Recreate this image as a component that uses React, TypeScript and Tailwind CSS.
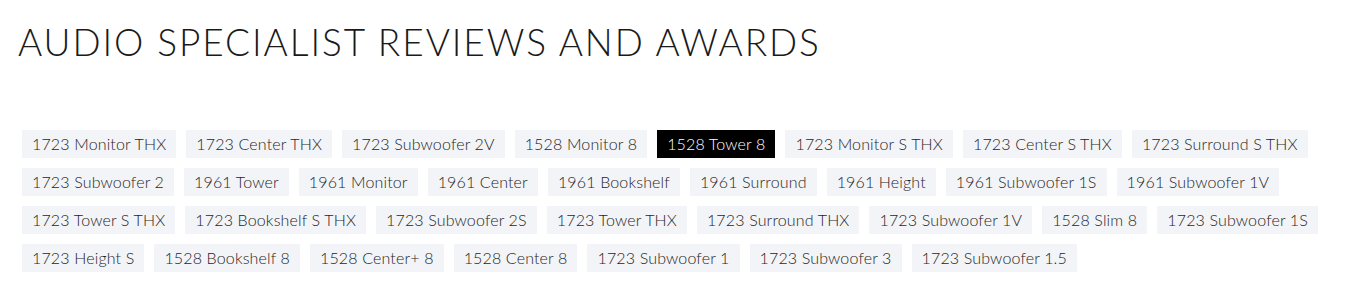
const TAGS = [
  '1723 Monitor THX', '1723 Center THX', '1723 Subwoofer 2V', '1528 Monitor 8', '1528 Tower 8',
  '1723 Monitor S THX', '1723 Center S THX', '1723 Surround S THX',
  '1723 Subwoofer 2', '1961 Tower', '1961 Monitor', '1961 Center', '1961 Bookshelf', '1961 Surround',
  '1961 Height', '1961 Subwoofer 1S', '1961 Subwoofer 1V',
  '1723 Tower S THX', '1723 Bookshelf S THX', '1723 Subwoofer 2S', '1723 Tower THX', '1723 Surround THX',
  '1723 Subwoofer 1V', '1528 Slim 8', '1723 Subwoofer 1S',
  '1723 Height S', '1528 Bookshelf 8', '1528 Center+ 8', '1528 Center 8', '1723 Subwoofer 1',
  '1723 Subwoofer 3', '1723 Subwoofer 1.5',
]

const ACTIVE = '1528 Tower 8'

export default function App() {
  return (
    <div className="h-[296px] w-[1348px] bg-white">
      <h1 className="pl-[18px] pt-[20px] text-[37px] leading-[44px] font-light tracking-[0.052em] text-[#1a1a1a] font-['Lato',sans-serif]">
        AUDIO SPECIALIST REVIEWS AND AWARDS
      </h1>
      <div className="mt-[66px] flex w-[1326px] flex-wrap gap-[10px] pl-[22px] font-['Lato',sans-serif]">
        {TAGS.map(t => (
          <span key={t}
            className={t === ACTIVE
              ? 'flex h-[28px] items-center bg-black px-[10px] text-[16px] font-light tracking-[0.15px] text-white'
              : 'flex h-[28px] items-center bg-[#f3f4f7] px-[10px] text-[16px] font-light tracking-[0.15px] text-[#1f1f1f]'}>
            {t}
          </span>
        ))}
      </div>
    </div>
  )
}
